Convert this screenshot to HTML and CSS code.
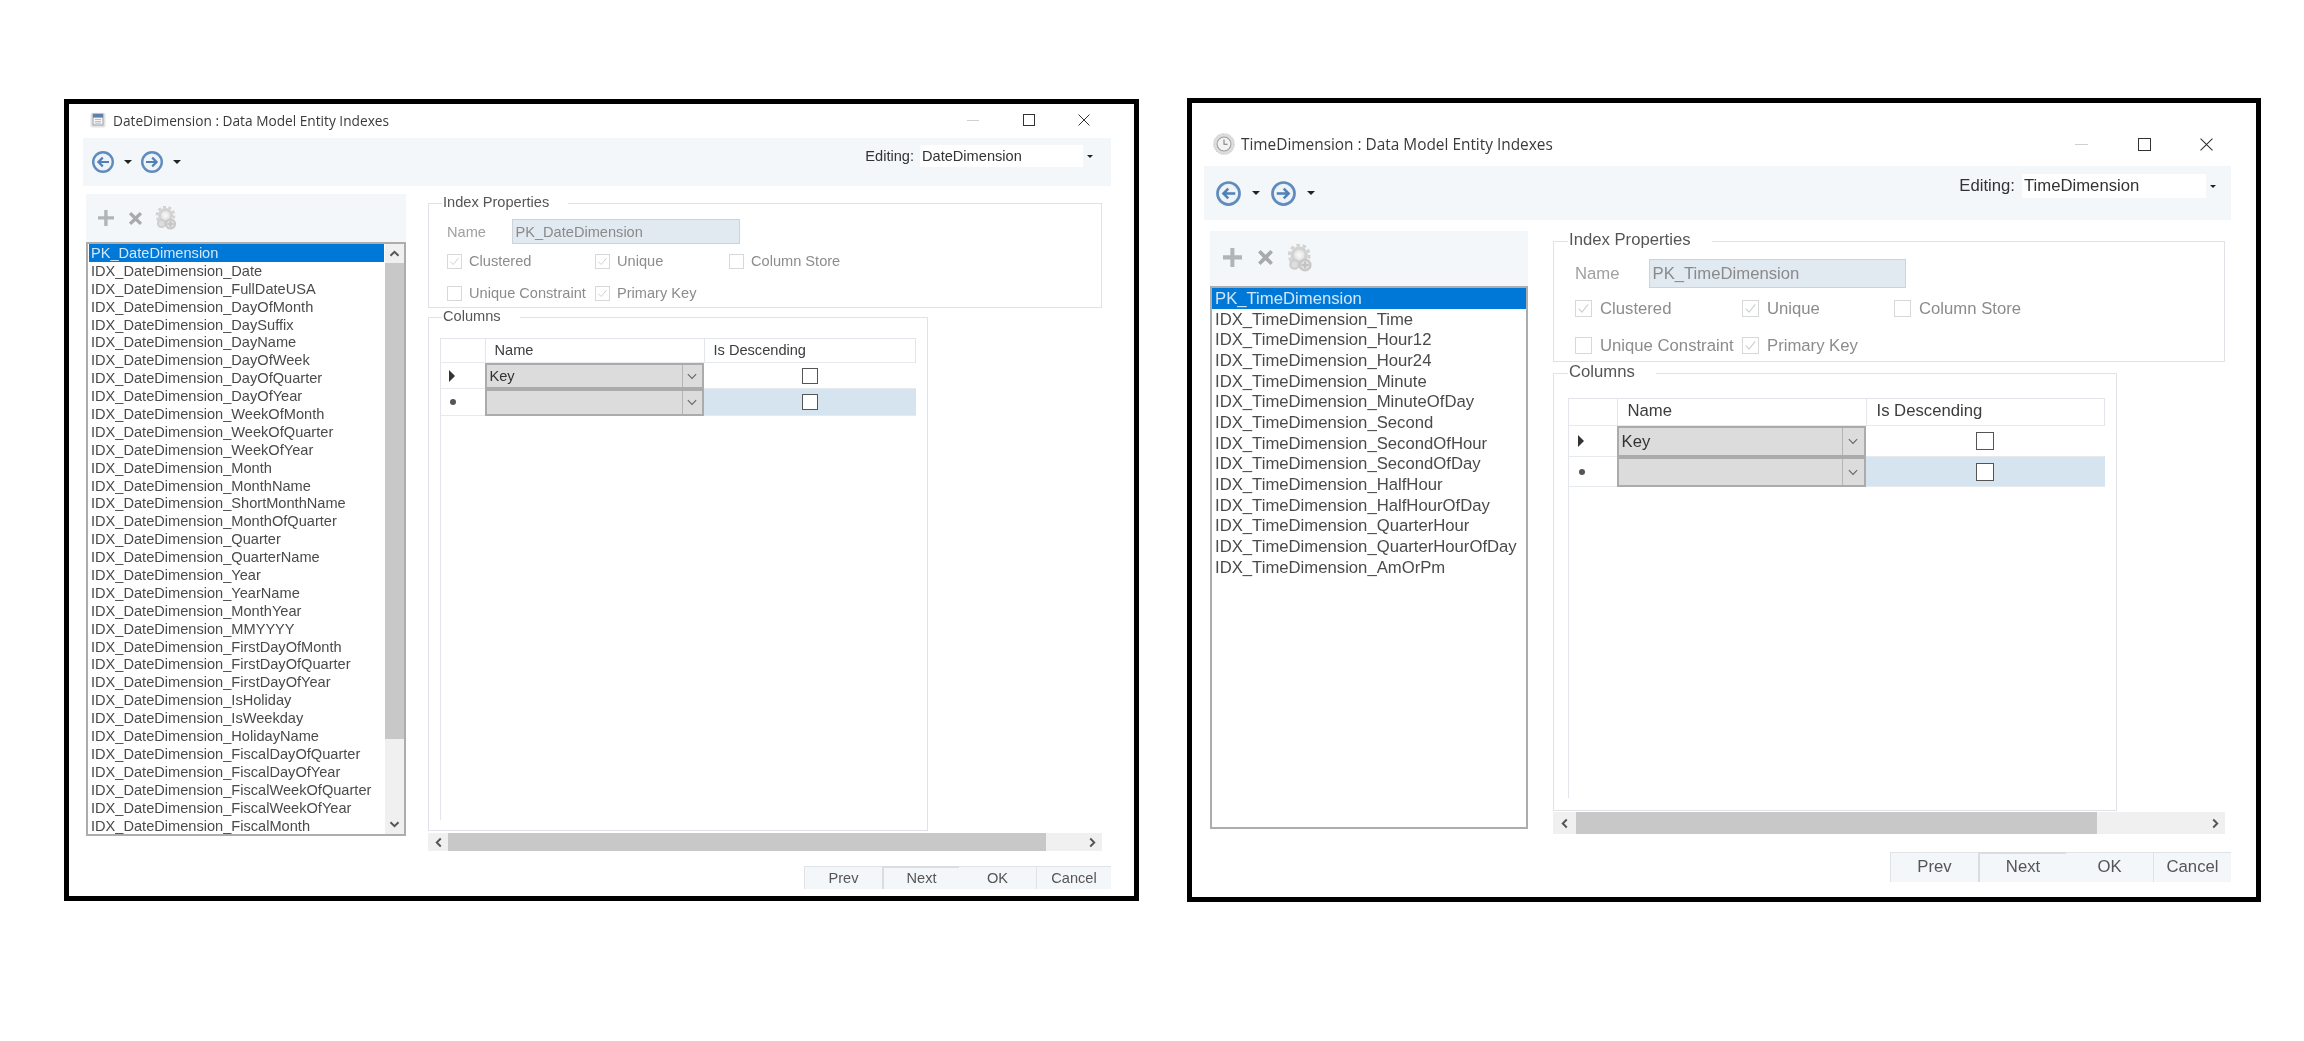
FILE: index.html
```html
<!DOCTYPE html>
<html lang="en">
<head>
<meta charset="utf-8">
<title>Data Model Entity Indexes</title>
<link rel="stylesheet" href="styles.css">
</head>
<body>
<svg class="defs" aria-hidden="true">
  <symbol id="i-back" viewBox="0 0 24 24"><circle cx="12" cy="12" r="9.8" fill="#eef3f8" stroke="#5f8cbd" stroke-width="2.4"/><path d="M18 12H7.5M11.8 7.6 7.4 12l4.4 4.4" fill="none" stroke="#4f81b8" stroke-width="2.2"/></symbol>
  <symbol id="i-fwd" viewBox="0 0 24 24"><circle cx="12" cy="12" r="9.8" fill="#eef3f8" stroke="#5f8cbd" stroke-width="2.4"/><path d="M6 12h10.5M12.2 7.6l4.4 4.4-4.4 4.4" fill="none" stroke="#4f81b8" stroke-width="2.2"/></symbol>
  <symbol id="i-plus" viewBox="0 0 16 16"><path d="M6.2 0h3.4v6.2H16v3.4H9.6V16H6.2V9.6H0V6.2h6.2z" fill="#b2b5b7"/></symbol>
  <symbol id="i-del" viewBox="0 0 16 16"><path d="M3.4 1 8 5.4 12.6 1 15 3.4 10.5 8l4.5 4.6-2.4 2.4L8 10.6 3.4 15 1 12.6 5.5 8 1 3.4z" fill="#a8aaac"/></symbol>
  <symbol id="i-gears" viewBox="0 0 24 24"><circle cx="10.5" cy="9.5" r="6" fill="#e8e8e8" stroke="#d2d2d2" stroke-width="3"/><circle cx="10.5" cy="9.5" r="8.6" fill="none" stroke="#d2d2d2" stroke-width="2.4" stroke-dasharray="3 2.4"/><circle cx="10.5" cy="9.5" r="2.4" fill="#f4f4f4"/><circle cx="6.5" cy="17.5" r="3.6" fill="#dedede" stroke="#cfcfcf" stroke-width="2"/><circle cx="15.5" cy="18" r="4.6" fill="#dedede" stroke="#c8c8c8" stroke-width="2"/><path d="M15.5 15v6M12.5 18h6" stroke="#c2c2c2" stroke-width="1.6"/></symbol>
  <symbol id="i-cal" viewBox="0 0 16 16"><rect x=".5" y=".8" width="15" height="14.7" rx="2" fill="#e2e3e5"/><rect x="3" y="2" width="10" height="11" fill="#f4f4f4" stroke="#8d949c" stroke-width=".8"/><rect x="3" y="2" width="10" height="3.6" fill="#5f7fae"/><path d="M5 7.5h6M5 9.5h6M5 11.2h6" stroke="#b4b8be" stroke-width=".9"/></symbol>
  <symbol id="i-clock" viewBox="0 0 24 24"><circle cx="12" cy="12" r="11.2" fill="#dcdddc" stroke="#cfcfcf" stroke-width="1.2" stroke-dasharray="2 .8"/><circle cx="12" cy="12" r="7.6" fill="#f3f3f3" stroke="#9a9e9e" stroke-width="1.1"/><path d="M12 7v5.2h4" fill="none" stroke="#777" stroke-width="1.1"/></symbol>
  <symbol id="i-tick" viewBox="0 0 16 16"><path d="M3 8.2l3.4 3.6L13 3.6" fill="none" stroke="#cdd0d3" stroke-width="1.2"/></symbol>
  <symbol id="i-chev" viewBox="0 0 12 8"><path d="M1 1.2 6 6.4l5-5.2" fill="none" stroke="#666" stroke-width="1.3"/></symbol>
  <symbol id="i-up" viewBox="0 0 12 8"><path d="M1.4 6.6 6 2l4.6 4.6" fill="none" stroke="#555" stroke-width="2.2"/></symbol>
  <symbol id="i-down" viewBox="0 0 12 8"><path d="M1.4 1.4 6 6l4.6-4.6" fill="none" stroke="#555" stroke-width="2.2"/></symbol>
  <symbol id="i-left" viewBox="0 0 8 12"><path d="M6.6 1.4 2 6l4.6 4.6" fill="none" stroke="#555" stroke-width="2.2"/></symbol>
  <symbol id="i-right" viewBox="0 0 8 12"><path d="M1.4 1.4 6 6l-4.6 4.6" fill="none" stroke="#555" stroke-width="2.2"/></symbol>
</svg>

<main class="desktop">
  <section class="win win-date">
    <header class="titlebar">
      <svg class="app-icon"><use href="#i-cal"/></svg>
      <span class="title">DateDimension : Data Model Entity Indexes</span>
      <div class="controls">
        <span class="ctl"><i class="ctl-min"></i></span>
        <span class="ctl"><i class="ctl-max"></i></span>
        <span class="ctl"><svg class="ctl-close" viewBox="0 0 12 12"><path d="M.5.5l11 11M11.5.5l-11 11" stroke="#333" fill="none"/></svg></span>
      </div>
    </header>
    <div class="toolbar">
      <div class="nav"><svg class="nav-icon"><use href="#i-back"/></svg><i class="caret"></i></div>
      <div class="nav"><svg class="nav-icon"><use href="#i-fwd"/></svg><i class="caret"></i></div>
      <div class="editing">
        <span class="editing-label">Editing:</span>
        <div class="combo"><span class="combo-text">DateDimension</span><span class="combo-btn"><i class="caret caret-small"></i></span></div>
      </div>
    </div>
    <div class="body">
      <div class="left">
        <div class="left-tools">
          <svg class="t-plus"><use href="#i-plus"/></svg>
          <svg class="t-del"><use href="#i-del"/></svg>
          <svg class="t-gears"><use href="#i-gears"/></svg>
        </div>
        <div class="list">
          <div class="items">
            <div class="item selected">PK_DateDimension</div>
            <div class="item">IDX_DateDimension_Date</div>
            <div class="item">IDX_DateDimension_FullDateUSA</div>
            <div class="item">IDX_DateDimension_DayOfMonth</div>
            <div class="item">IDX_DateDimension_DaySuffix</div>
            <div class="item">IDX_DateDimension_DayName</div>
            <div class="item">IDX_DateDimension_DayOfWeek</div>
            <div class="item">IDX_DateDimension_DayOfQuarter</div>
            <div class="item">IDX_DateDimension_DayOfYear</div>
            <div class="item">IDX_DateDimension_WeekOfMonth</div>
            <div class="item">IDX_DateDimension_WeekOfQuarter</div>
            <div class="item">IDX_DateDimension_WeekOfYear</div>
            <div class="item">IDX_DateDimension_Month</div>
            <div class="item">IDX_DateDimension_MonthName</div>
            <div class="item">IDX_DateDimension_ShortMonthName</div>
            <div class="item">IDX_DateDimension_MonthOfQuarter</div>
            <div class="item">IDX_DateDimension_Quarter</div>
            <div class="item">IDX_DateDimension_QuarterName</div>
            <div class="item">IDX_DateDimension_Year</div>
            <div class="item">IDX_DateDimension_YearName</div>
            <div class="item">IDX_DateDimension_MonthYear</div>
            <div class="item">IDX_DateDimension_MMYYYY</div>
            <div class="item">IDX_DateDimension_FirstDayOfMonth</div>
            <div class="item">IDX_DateDimension_FirstDayOfQuarter</div>
            <div class="item">IDX_DateDimension_FirstDayOfYear</div>
            <div class="item">IDX_DateDimension_IsHoliday</div>
            <div class="item">IDX_DateDimension_IsWeekday</div>
            <div class="item">IDX_DateDimension_HolidayName</div>
            <div class="item">IDX_DateDimension_FiscalDayOfQuarter</div>
            <div class="item">IDX_DateDimension_FiscalDayOfYear</div>
            <div class="item">IDX_DateDimension_FiscalWeekOfQuarter</div>
            <div class="item">IDX_DateDimension_FiscalWeekOfYear</div>
            <div class="item">IDX_DateDimension_FiscalMonth</div>
          </div>
          <div class="vscroll">
            <span class="vs-btn"><svg class="arrow-v"><use href="#i-up"/></svg></span>
            <span class="vs-thumb"></span>
            <span class="vs-rest"></span>
            <span class="vs-btn"><svg class="arrow-v"><use href="#i-down"/></svg></span>
          </div>
        </div>
      </div>
      <div class="right">
        <div class="group props">
          <span class="legend">Index Properties</span>
          <div class="name-row"><span class="name-label">Name</span><span class="name-input">PK_DateDimension</span></div>
          <div class="checks">
            <label class="check"><span class="box"><svg class="tick"><use href="#i-tick"/></svg></span>Clustered</label>
            <label class="check"><span class="box"><svg class="tick"><use href="#i-tick"/></svg></span>Unique</label>
            <label class="check"><span class="box"></span>Column Store</label>
            <label class="check"><span class="box"></span>Unique Constraint</label>
            <label class="check"><span class="box"><svg class="tick"><use href="#i-tick"/></svg></span>Primary Key</label>
          </div>
        </div>
        <div class="group columns">
          <span class="legend">Columns</span>
          <div class="table">
            <div class="row head"><span class="c-hdr"></span><span class="c-name">Name</span><span class="c-desc">Is Descending</span></div>
            <div class="row body-row"><span class="c-hdr"><i class="cur"></i></span><span class="cell-combo"><span class="cc-text">Key</span><span class="cc-btn"><svg class="chev"><use href="#i-chev"/></svg></span></span><span class="c-desc center"><i class="cb"></i></span></div>
            <div class="row new-row"><span class="c-hdr"><i class="star"></i></span><span class="cell-combo"><span class="cc-text"></span><span class="cc-btn"><svg class="chev"><use href="#i-chev"/></svg></span></span><span class="c-desc center sel"><i class="cb"></i></span></div>
          </div>
        </div>
        <div class="hscroll">
          <span class="hs-btn"><svg class="arrow-h"><use href="#i-left"/></svg></span>
          <span class="hs-thumb"></span>
          <span class="hs-rest"><svg class="arrow-h"><use href="#i-right"/></svg></span>
        </div>
      </div>
    </div>
    <footer class="buttons">
      <button class="btn">Prev</button><button class="btn default">Next</button><button class="btn">OK</button><button class="btn">Cancel</button>
    </footer>
  </section>

  <section class="win win-time">
    <header class="titlebar">
      <svg class="app-icon"><use href="#i-clock"/></svg>
      <span class="title">TimeDimension : Data Model Entity Indexes</span>
      <div class="controls">
        <span class="ctl"><i class="ctl-min"></i></span>
        <span class="ctl"><i class="ctl-max"></i></span>
        <span class="ctl"><svg class="ctl-close" viewBox="0 0 12 12"><path d="M.5.5l11 11M11.5.5l-11 11" stroke="#333" fill="none"/></svg></span>
      </div>
    </header>
    <div class="toolbar">
      <div class="nav"><svg class="nav-icon"><use href="#i-back"/></svg><i class="caret"></i></div>
      <div class="nav"><svg class="nav-icon"><use href="#i-fwd"/></svg><i class="caret"></i></div>
      <div class="editing">
        <span class="editing-label">Editing:</span>
        <div class="combo"><span class="combo-text">TimeDimension</span><span class="combo-btn"><i class="caret caret-small"></i></span></div>
      </div>
    </div>
    <div class="body">
      <div class="left">
        <div class="left-tools">
          <svg class="t-plus"><use href="#i-plus"/></svg>
          <svg class="t-del"><use href="#i-del"/></svg>
          <svg class="t-gears"><use href="#i-gears"/></svg>
        </div>
        <div class="list">
          <div class="items">
            <div class="item selected">PK_TimeDimension</div>
            <div class="item">IDX_TimeDimension_Time</div>
            <div class="item">IDX_TimeDimension_Hour12</div>
            <div class="item">IDX_TimeDimension_Hour24</div>
            <div class="item">IDX_TimeDimension_Minute</div>
            <div class="item">IDX_TimeDimension_MinuteOfDay</div>
            <div class="item">IDX_TimeDimension_Second</div>
            <div class="item">IDX_TimeDimension_SecondOfHour</div>
            <div class="item">IDX_TimeDimension_SecondOfDay</div>
            <div class="item">IDX_TimeDimension_HalfHour</div>
            <div class="item">IDX_TimeDimension_HalfHourOfDay</div>
            <div class="item">IDX_TimeDimension_QuarterHour</div>
            <div class="item">IDX_TimeDimension_QuarterHourOfDay</div>
            <div class="item">IDX_TimeDimension_AmOrPm</div>
          </div>
        </div>
      </div>
      <div class="right">
        <div class="group props">
          <span class="legend">Index Properties</span>
          <div class="name-row"><span class="name-label">Name</span><span class="name-input">PK_TimeDimension</span></div>
          <div class="checks">
            <label class="check"><span class="box"><svg class="tick"><use href="#i-tick"/></svg></span>Clustered</label>
            <label class="check"><span class="box"><svg class="tick"><use href="#i-tick"/></svg></span>Unique</label>
            <label class="check"><span class="box"></span>Column Store</label>
            <label class="check"><span class="box"></span>Unique Constraint</label>
            <label class="check"><span class="box"><svg class="tick"><use href="#i-tick"/></svg></span>Primary Key</label>
          </div>
        </div>
        <div class="group columns">
          <span class="legend">Columns</span>
          <div class="table">
            <div class="row head"><span class="c-hdr"></span><span class="c-name">Name</span><span class="c-desc">Is Descending</span></div>
            <div class="row body-row"><span class="c-hdr"><i class="cur"></i></span><span class="cell-combo"><span class="cc-text">Key</span><span class="cc-btn"><svg class="chev"><use href="#i-chev"/></svg></span></span><span class="c-desc center"><i class="cb"></i></span></div>
            <div class="row new-row"><span class="c-hdr"><i class="star"></i></span><span class="cell-combo"><span class="cc-text"></span><span class="cc-btn"><svg class="chev"><use href="#i-chev"/></svg></span></span><span class="c-desc center sel"><i class="cb"></i></span></div>
          </div>
        </div>
        <div class="hscroll">
          <span class="hs-btn"><svg class="arrow-h"><use href="#i-left"/></svg></span>
          <span class="hs-thumb"></span>
          <span class="hs-rest"><svg class="arrow-h"><use href="#i-right"/></svg></span>
        </div>
      </div>
    </div>
    <footer class="buttons">
      <button class="btn">Prev</button><button class="btn default">Next</button><button class="btn">OK</button><button class="btn">Cancel</button>
    </footer>
  </section>
</main>
</body>
</html>
```
FILE: styles.css
```css
* { box-sizing: border-box; }
html, body { margin: 0; padding: 0; background: #fff; }
.defs { position: absolute; width: 0; height: 0; }
.desktop { position: relative; height: 1041px; overflow: hidden; font-family: "Liberation Sans", Arial, sans-serif; color: #444; }
svg { display: block; flex: none; overflow: visible; }
i { display: block; }

.win { position: absolute; display: flex; flex-direction: column; background: #fff; border: 5px solid #000; filter: blur(.35px); }
.win-date {
  left: 64px; top: 99px; width: 1075px; height: 802px; font-size: 14.6px;
  --title-h: 34px; --title-pt: 0px; --title-pb: 2px; --title-size: 13.7px; --icon: 16px; --icon-gap: 7px;
  --ctl: 55.5px; --ctl-pr: 22px; --ctl-size: 12px;
  --tb-ml: 14px; --tb-mr: 23px; --tb-h: 48px; --tb-pl: 9px; --nav: 24px; --nav-slot: 49px; --caret-ml: 9px; --caret: 4px;
  --combo-w: 177px; --combo-h: 22px; --combo-mt: 7px; --combo-mr: 14px; --ed-gap: 6px;
  --body-mt: 8px; --body-pl: 17px; --left-w: 320px; --ltools-h: 48px; --list-h: 594px; --list-pl: 1px;
  --item-h: 17.9px; --item-pl: 2px; --ltools-pl: 12px; --ltools-pb: 0px;
  --plus: 16px; --del: 15px; --gears: 24px; --del-ml: 13.5px; --gears-ml: 12.5px;
  --right-ml: 22px; --right-w: 674px; --p-mt: 9px; --p-h: 105px; --col-mt: 9px; --col-h: 514px; --col-w: 500px;
  --leg-ml: 13px; --leg-gap: 19px; --np-top: 15px; --np-pl: 18px; --nl-w: 64.5px; --ni-w: 228px; --ni-h: 25px;
  --ck-mt: 1px; --ck-rows: 32px; --ck-cols: 148px 134px 1fr; --box: 15px; --box-gap: 7px;
  --t-top: 20px; --t-left: 11px; --t-w: 476px; --t-h: 482px; --t-cols: 45px 219px 212px;
  --r0: 25px; --r1: 26px; --r2: 27px; --hdr-pl: 8px; --desc-pl: 9px; --key-pl: 3px; --cc-btn: 20px; --cb: 16px;
  --hs-mt: 2px; --hs-h: 18px; --hs-btn: 20px; --hs-thumb: 598px;
  --btn-mt: 15px; --btn-h: 23px; --btn-pb: 0px; --btn-mr: 23px; --b1: 78px; --b2: 77px; --b3: 77px; --b4: 75px;
}
.win-time {
  left: 1187px; top: 98px; width: 1074px; height: 804px; font-size: 16.7px;
  --title-h: 63px; --title-pt: 19px; --title-pb: 0px; --title-size: 15.4px; --icon: 22px; --icon-gap: 6px;
  --ctl: 62.5px; --ctl-pr: 18px; --ctl-size: 13px;
  --tb-ml: 12px; --tb-mr: 25px; --tb-h: 54px; --tb-pl: 12px; --nav: 27px; --nav-slot: 55px; --caret-ml: 10px; --caret: 4.5px;
  --combo-w: 198px; --combo-h: 24px; --combo-mt: 8px; --combo-mr: 11px; --ed-gap: 7px;
  --body-mt: 11px; --body-pl: 18px; --left-w: 318px; --ltools-h: 55px; --list-h: 543px; --list-pl: 0px;
  --item-h: 20.68px; --item-pl: 3px; --ltools-pl: 12.5px; --ltools-pb: 2px;
  --plus: 19px; --del: 17px; --gears: 28px; --del-ml: 15px; --gears-ml: 13.5px;
  --right-ml: 25px; --right-w: 672px; --p-mt: 10px; --p-h: 121px; --col-mt: 11px; --col-h: 438px; --col-w: 564px;
  --leg-ml: 14px; --leg-gap: 21px; --np-top: 17px; --np-pl: 21px; --nl-w: 73.5px; --ni-w: 257.5px; --ni-h: 29px;
  --ck-mt: 2px; --ck-rows: 37px; --ck-cols: 167px 152px 1fr; --box: 17px; --box-gap: 8px;
  --t-top: 24px; --t-left: 14px; --t-w: 537px; --t-h: 400px; --t-cols: 49px 249px 239px;
  --r0: 28px; --r1: 31px; --r2: 30px; --hdr-pl: 9px; --desc-pl: 10px; --key-pl: 3px; --cc-btn: 22px; --cb: 18px;
  --hs-mt: 1px; --hs-h: 22px; --hs-btn: 23px; --hs-thumb: 521px;
  --btn-mt: 18px; --btn-h: 30px; --btn-pb: 2px; --btn-mr: 25px; --b1: 88px; --b2: 88px; --b3: 87px; --b4: 78px;
}

.titlebar { flex: none; display: flex; align-items: center; height: var(--title-h); padding: var(--title-pt) var(--ctl-pr) var(--title-pb) 21px; }
.app-icon { width: var(--icon); height: var(--icon); margin-right: var(--icon-gap); }
.title { font-family: "Open Sans", "Noto Sans", sans-serif; font-size: var(--title-size); color: #3a3a3a; white-space: nowrap; }
.controls { margin-left: auto; display: flex; }
.ctl { width: var(--ctl); display: flex; justify-content: center; align-items: center; }
.ctl-min { width: var(--ctl-size); height: 1px; background: #d0d0d0; }
.ctl-max { width: var(--ctl-size); height: var(--ctl-size); border: 1px solid #333; }
.ctl-close { width: var(--ctl-size); height: var(--ctl-size); }

.toolbar { flex: none; display: flex; align-items: center; height: var(--tb-h); margin: 0 var(--tb-mr) 0 var(--tb-ml); padding-left: var(--tb-pl); background: #f3f7fa; }
.nav { width: var(--nav-slot); display: flex; align-items: center; }
.nav-icon { width: var(--nav); height: var(--nav); margin-left: -1px; }
.caret { width: 0; height: 0; margin-left: var(--caret-ml); border: var(--caret) solid transparent; border-top-color: #222; border-bottom: 0; }
.caret-small { margin: 0; border-width: 3.5px 3px 0; }
.editing { align-self: flex-start; margin: var(--combo-mt) var(--combo-mr) 0 auto; display: flex; align-items: center; gap: var(--ed-gap); }
.editing-label { color: #333; }
.combo { width: var(--combo-w); height: var(--combo-h); display: flex; align-items: center; background: #fff; padding-left: 2px; }
.combo-text { flex: 1; color: #333; }
.combo-btn { width: 14px; align-self: stretch; background: #f3f7fa; display: flex; align-items: center; justify-content: center; }

.body { flex: none; display: flex; margin-top: var(--body-mt); padding-left: var(--body-pl); }
.left { flex: none; width: var(--left-w); }
.left-tools { display: flex; align-items: center; height: var(--ltools-h); padding: 0 0 var(--ltools-pb) var(--ltools-pl); background: #f3f7fa; }
.t-plus { width: var(--plus); height: var(--plus); }
.t-del { width: var(--del); height: var(--del); margin-left: var(--del-ml); }
.t-gears { width: var(--gears); height: var(--gears); margin-left: var(--gears-ml); }
.list { display: flex; height: var(--list-h); border: 2px solid #adadad; padding-left: var(--list-pl); background: #fff; overflow: hidden; }
.items { flex: 1; min-width: 0; }
.item { height: var(--item-h); line-height: calc(var(--item-h) + 2px); padding-left: var(--item-pl); color: #4a4a4a; white-space: nowrap; }
.item.selected { background: #0078d7; color: #d3e7f9; }
.vscroll { flex: none; width: 19px; margin-left: 1px; display: flex; flex-direction: column; background: #f0f0f0; }
.vs-btn { flex: none; height: 19px; display: flex; align-items: center; justify-content: center; }
.vs-thumb { flex: none; height: 476px; background: #c8c8c8; }
.vs-rest { flex: 1; }
.arrow-v { width: 11px; height: 7px; }

.right { flex: none; width: var(--right-w); margin-left: var(--right-ml); display: flex; flex-direction: column; }
.group { position: relative; border: 1.5px solid #dfe3e8; }
.legend { position: absolute; top: 0; left: var(--leg-ml); transform: translateY(-60%); padding: 0 var(--leg-gap) 0 1px; background: #fff; color: #555; white-space: nowrap; }
.props { height: var(--p-h); margin-top: var(--p-mt); padding: var(--np-top) 0 0 var(--np-pl); }
.name-row { display: flex; align-items: center; }
.name-label { width: var(--nl-w); color: #a0a0a0; }
.name-input { width: var(--ni-w); height: var(--ni-h); display: flex; align-items: center; padding-left: 3px; background: #e1e9f1; border: 1px solid #cfd3d8; color: #8a8a8a; }
.checks { display: grid; grid-template-columns: var(--ck-cols); grid-auto-rows: var(--ck-rows); margin-top: var(--ck-mt); }
.check { display: flex; align-items: center; gap: var(--box-gap); color: #8c8c8c; white-space: nowrap; }
.box { flex: none; width: var(--box); height: var(--box); border: 1px solid #d6d8da; background: #fff; }
.tick { width: 100%; height: 100%; }

.columns { height: var(--col-h); width: var(--col-w); margin-top: var(--col-mt); padding: var(--t-top) 0 0 var(--t-left); }
.table { width: var(--t-w); height: var(--t-h); border-left: 1.5px solid #e2e6ea; display: flex; flex-direction: column; }
.row { display: grid; grid-template-columns: var(--t-cols); margin-left: -1.5px; }
.head { height: var(--r0); border-top: 1.5px solid #e2e6ea; color: #3c3c3c; }
.body-row { height: var(--r1); }
.new-row { height: var(--r2); }
.c-hdr { display: flex; align-items: center; padding-left: var(--hdr-pl); border-bottom: 1.5px solid #e6e9ed; border-left: 1.5px solid #e2e6ea; }
.c-name { display: flex; align-items: center; padding: 0 0 2px var(--desc-pl); border-left: 1.5px solid #e2e6ea; border-bottom: 1.5px solid #e6e9ed; }
.c-desc { display: flex; align-items: center; padding: 0 0 2px var(--desc-pl); border-left: 1.5px solid #e2e6ea; border-right: 1.5px solid #e2e6ea; border-bottom: 1.5px solid #e6e9ed; }
.center { justify-content: center; padding: 0; border-left: 0; border-right: 0; }
.sel { background: #d6e4f0; }
.cur { width: 0; height: 0; border-left: 6px solid #333; border-top: 6px solid transparent; border-bottom: 6px solid transparent; }
.star { width: 6px; height: 6px; margin-left: 1px; border-radius: 50%; background: #555; }
.cell-combo { display: flex; background: #dcdcdc; border: 2px solid #ababab; color: #333; }
.cc-text { flex: 1; display: flex; align-items: center; padding-left: var(--key-pl); }
.cc-btn { width: var(--cc-btn); border-left: 1.5px solid #b4b4b4; display: flex; align-items: center; justify-content: center; }
.chev { width: 10px; height: 7px; }
.cb { width: var(--cb); height: var(--cb); border: 1.5px solid #555; background: #fff; }

.hscroll { display: flex; height: var(--hs-h); margin-top: var(--hs-mt); background: #f0f0f0; }
.hs-btn { flex: none; width: var(--hs-btn); display: flex; align-items: center; justify-content: center; }
.hs-thumb { flex: none; width: var(--hs-thumb); background: #c8c8c8; }
.hs-rest { flex: 1; display: flex; align-items: center; justify-content: flex-end; padding-right: 6px; }
.arrow-h { width: 7px; height: 11px; }

.buttons { flex: none; display: flex; justify-content: flex-end; margin-top: var(--btn-mt); margin-right: var(--btn-mr); }
.btn { height: var(--btn-h); padding: 0 0 var(--btn-pb); font: inherit; color: #555; background: #f3f7fa; border: 1.5px solid #dfe3e8; border-bottom: 0; border-right: 0; }
.btn:nth-child(1) { width: var(--b1); }
.btn:nth-child(2) { width: var(--b2); padding-bottom: calc(var(--btn-pb) + 1px); border-width: 2.5px 2.5px 0 2.5px; border-color: #d9dde2; }
.btn:nth-child(3) { width: var(--b3); border-left: 0; }
.btn:nth-child(4) { width: var(--b4); }
```
